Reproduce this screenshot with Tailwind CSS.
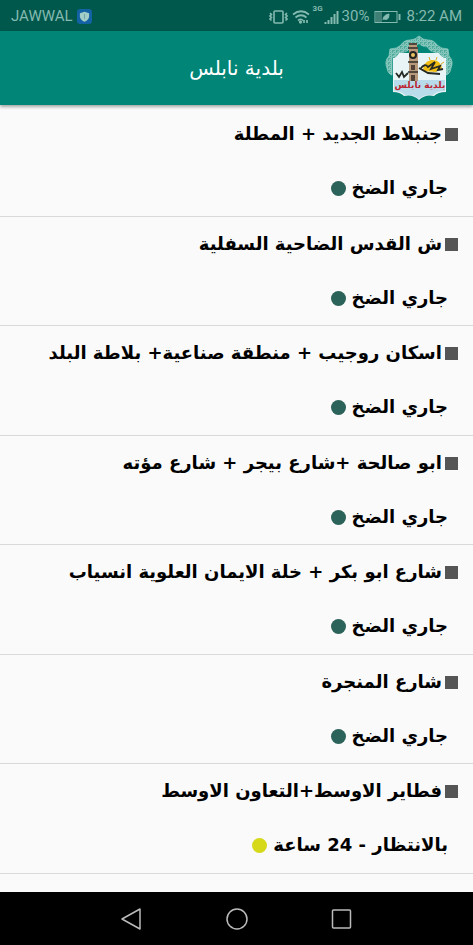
<!DOCTYPE html>
<html lang="ar"><head><meta charset="utf-8"><meta name="viewport" content="width=device-width"><title>بلدية نابلس</title>
<script src="https://cdn.jsdelivr.net/npm/@tailwindcss/browser@4"></script></head>
<body class="h-screen flex flex-col overflow-hidden bg-[#fafafa] font-['DejaVu_Sans',sans-serif] text-black">
<div class="h-[31px] shrink-0 bg-[#00574b] flex items-center justify-between px-[11px] pt-[2px] font-[Roboto,sans-serif] text-[15px] text-[#84bab0]">
  <div class="flex items-center gap-[4px]"><span>JAWWAL</span>
    <svg class="size-[15px]" viewBox="0 0 14 14"><rect width="14" height="14" rx="3" fill="#1262a4"/><path d="M7 2.500 11.300 4v3c0 2.500-2.300 4-4.300 5-2-1-4.300-2.500-4.300-5V4Z" fill="#a5cec8"/><path d="M7 4.500v5" stroke="#6eaaa9"/></svg></div>
  <div class="flex items-center" dir="ltr">
    <svg class="w-[19px] h-[16px]" viewBox="0 0 19 16" fill="none" stroke="currentColor" stroke-width="1.600"><rect x="5" y="2" width="9" height="12" rx="1"/><path d="M1 4l1.500 1.500L1 7l1.500 1.500L1 10l1.500 1.500M18 4l-1.500 1.500L18 7l-1.500 1.500L18 10l-1.500 1.500"/></svg>
    <svg class="w-[18px] h-[16px] ml-[4px]" viewBox="0 0 18 16" fill="none" stroke="currentColor" stroke-width="1.700"><path d="M1 5.500Q9-1 17 5.500M3.500 8.500Q9 4 14.500 8.500M6 11.500q3-2.500 5 0"/><circle cx="8.500" cy="13" r=".8"/><path d="M12 11v3M15 11v3"/></svg>
    <span class="text-[8px] font-bold leading-none self-start ml-[3px]">3G</span>
    <svg class="w-[17px] h-[14px]" viewBox="0 0 16 14" fill="currentColor"><path d="M1 12h2v2H1zM4 10h2v4H4zM7 7h2v7H7zM10 4h2v10h-2zM13 1h2v13h-2z"/></svg>
    <span class="ml-[2px]">30%</span>
    <svg class="w-[27px] h-[14px] mx-[5px]" viewBox="0 0 27 14" fill="none" stroke="currentColor"><rect x="1" y="1.500" width="22" height="11"/><path d="M2 2h6v10H2z" fill="#407f75" stroke="none"/><path d="M9 10q0-5 6-6 0 7-5 5" fill="currentColor"/><path d="M25.500 4v6" stroke-width="2"/></svg>
    <span>8:22 AM</span></div>
</div>
<header class="relative z-10 h-[74px] shrink-0 bg-[#008577] shadow-[0_2px_3px_#0005] grid grid-cols-[88px_1fr_88px] items-center">
  <h1 class="col-start-2 text-center text-[20px] text-white" dir="rtl">بلدية نابلس</h1>
  <svg class="w-[68px] h-[66px]" viewBox="0 0 68 66" role="img" aria-label="شعار بلدية نابلس">
    <defs><pattern id="lace" width="4" height="4" patternUnits="userSpaceOnUse"><rect width="4" height="4" fill="#4faa9c"/><circle cx="1.500" cy="1.500" r="1.200" fill="none" stroke="#b9e0d8" stroke-width=".7"/><path d="M2 4 4 2" stroke="#9dd3c9" stroke-width=".8"/></pattern></defs>
    <path d="M34 1q4 4 9 4 6 0 9 5 4 4 11 4l1 7q5 5 2 12-1 6-5 7V22q-4 1-6-4H13q-2 5-6 4v18q-4-1-5-7-3-7 2-12l1-7q7 0 11-4 3-5 9-5 5 0 9-4Z" fill="url(#lace)" stroke="#9ed3ca" stroke-width=".7"/>
    <path d="M17 18q7-1 9-6 4 1 8-3 4 4 8 3 2 5 9 6Z" fill="#008577"/>
    <path d="M8 23q3 0 6-5h40q3 5 7 5v34q-8 0-12 4-9-2-15 4-6-6-15-4-4-4-11-4Z" fill="#e8f4f5"/>
    <path d="M9 45h51v11q-8 0-12 4-8-1-14 4-6-5-14-4-4-4-11-4Z" fill="#b9dceb"/>
    <path d="M24 8h8v4h1v34h-9z" fill="#b99b7c"/><path d="M24 9h8M23 13h10M23 27h10M23 37h10" stroke="#302c28" stroke-width="1.500"/><circle cx="28" cy="20" r="4" fill="#222"/><circle cx="28" cy="20" r="2" fill="#e8c15d"/><path d="M26 30h4v5h-4zM26 40h4v6h-4z" fill="#554236"/>
    <path d="M38 36q0-9 8-11 9-1 11 8l-6 4Z" fill="#f1bd13"/><path d="m45 25-1-3m7 3 1-3m4 7 3-2" stroke="#e1ad20"/><path d="M36 33q4-5 7-1l7-5-4 7 9-3-2 4 5-1M34 33l9 5 12 1M11 38l3 4 3-5 2 5 4-4" fill="none" stroke="#272923" stroke-width="1.800"/>
    <text x="35" y="53" text-anchor="middle" direction="rtl" font-family="DejaVu Sans" font-size="9" font-weight="700" fill="#bc2430">بلدية نابلس</text>
  </svg>
</header>
<main class="flex-1 min-h-0 overflow-hidden pt-[2px]" dir="rtl">
<ul class="text-[18px] font-bold leading-[24px]" id="areas"></ul>
</main>
<nav class="h-[53px] shrink-0 bg-black flex justify-center items-center gap-[81px] text-[#bbb]" dir="ltr">
 <button aria-label="رجوع"><svg class="size-[24px]" viewBox="0 0 24 24" fill="none" stroke="currentColor" stroke-width="1.500" stroke-linejoin="round"><path d="M20 2v20L2 12Z"/></svg></button>
 <button aria-label="الرئيسية"><svg class="size-[24px]" viewBox="0 0 24 24" fill="none" stroke="currentColor" stroke-width="1.500"><circle cx="12" cy="12" r="10"/></svg></button>
 <button aria-label="التطبيقات"><svg class="size-[24px]" viewBox="0 0 24 24" fill="none" stroke="currentColor" stroke-width="1.500"><rect x="2.500" y="3" width="18" height="18" rx="1"/></svg></button>
</nav>
<script>
const areas = [
 ['جنبلاط الجديد + المطلة'],['ش القدس الضاحية السفلية'],['اسكان روجيب + منطقة صناعية+ بلاطة البلد'],['ابو صالحة +شارع بيجر + شارع مؤته'],['شارع ابو بكر + خلة الايمان العلوية انسياب'],['شارع المنجرة'],['فطاير الاوسط+التعاون الاوسط','بالانتظار - 24 ساعة'],['المساكن الشعبية']
];
document.getElementById('areas').innerHTML = areas.map(([name,status]) => `<li class="border-b border-[#d9d9d9] pt-[15px] odd:pb-[16px] even:pb-[15px]">
<h2 class="flex items-center gap-[3px] pr-[15px] whitespace-nowrap"><span class="size-[13px] shrink-0 bg-[#555]"></span>${name}</h2>
<p class="mt-[30px] flex items-center gap-[6px] pr-[25px]">${status || 'جاري الضخ'}<span class="size-[15px] rounded-full ${status ? 'bg-[#d6d91a]' : 'bg-[#2b6259]'}"></span></p></li>`).join('');
</script>
</body></html>
